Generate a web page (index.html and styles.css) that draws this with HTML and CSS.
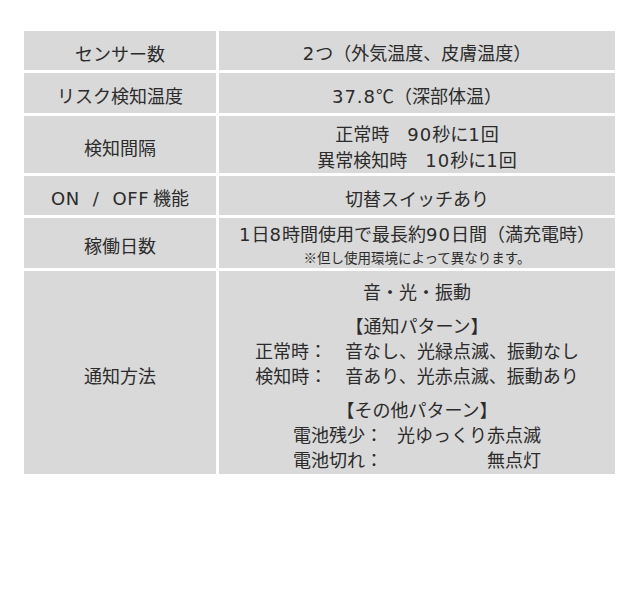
FILE: index.html
```html
<!DOCTYPE html>
<html lang="ja">
<head>
<meta charset="utf-8">
<link rel="stylesheet" href="styles.css">
</head>
<body>
<table class="spec">
  <tr class="ra">
    <th>センサー数</th>
    <td><span class="n">2</span>つ（外気温度、皮膚温度）</td>
  </tr>
  <tr class="rb">
    <th>リスク検知温度</th>
    <td><span class="n">37.8</span>℃（深部体温）</td>
  </tr>
  <tr class="rc">
    <th>検知間隔</th>
    <td>正常時　<span class="n">90</span>秒に<span class="n">1</span>回<br>異常検知時　<span class="n">10</span>秒に<span class="n">1</span>回</td>
  </tr>
  <tr class="ra">
    <th><span class="onoff">ON / OFF</span> 機能</th>
    <td>切替スイッチあり</td>
  </tr>
  <tr class="rd">
    <th>稼働日数</th>
    <td class="days"><div class="main"><span class="n">1</span>日<span class="n">8</span>時間使用で最長約<span class="n">90</span>日間（満充電時）</div><div class="note">※但し使用環境によって異なります。</div></td>
  </tr>
  <tr class="re">
    <th>通知方法</th>
    <td>
      <p class="para">音・光・振動</p>
      <p class="para">【通知パターン】<br>正常時：　音なし、光緑点滅、振動なし<br>検知時：　音あり、光赤点滅、振動あり</p>
      <p class="para">【その他パターン】<br>
        <span class="pairs">
          <span>電池残少：</span><span class="val">光ゆっくり赤点滅</span>
          <span>電池切れ：</span><span class="val">無点灯</span>
        </span>
      </p>
    </td>
  </tr>
</table>
</body>
</html>
```

FILE: styles.css
```css
html, body {
  margin: 0;
  padding: 0;
  background: #ffffff;
}
body {
  padding: 28px 22px 0 21px;
  font-family: "Noto Sans CJK JP", "Noto Sans", sans-serif;
  color: #2b2b2b;
}
.spec {
  width: 597px;
  border-collapse: separate;
  border-spacing: 3px;
  background: #ffffff;
}
.spec th,
.spec td {
  background: #d9d9d9;
  font-family: "Noto Sans CJK JP", "Noto Sans", sans-serif;
  font-weight: normal;
  font-size: 18px;
  line-height: 25px;
  text-align: center;
  vertical-align: middle;
  padding: 5px 0 0;
}
.spec th {
  width: 192px;
}
.ra th, .ra td { height: 34px; }
.rb th, .rb td { height: 35px; }
.rc th, .rc td { height: 52px; }
.rd th, .rd td { height: 45px; }
.spec .days {
  padding-top: 2px;
  height: 48px;
}
.re th, .re td { height: 198px; }
.n {
  font-family: "DejaVu Sans", sans-serif;
  letter-spacing: 1px;
}
.onoff {
  font-family: "DejaVu Sans", sans-serif;
  word-spacing: 7px;
  letter-spacing: 0.5px;
}
.days .main {
  line-height: 24px;
}
.note {
  font-size: 13.5px;
  line-height: 20px;
}
.para {
  margin: 0 0 9px;
}
.para:last-child {
  margin-bottom: 0;
}
.pairs {
  display: inline-grid;
  grid-template-columns: auto auto;
  column-gap: 14px;
  text-align: left;
}
.pairs .val {
  text-align: right;
}
```
